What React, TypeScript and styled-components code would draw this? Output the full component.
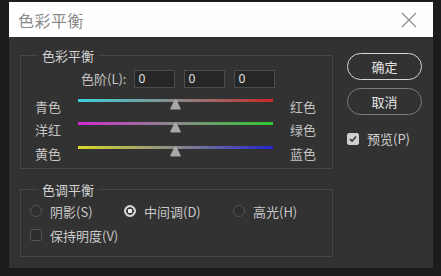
import React from 'react';
import styled, { createGlobalStyle } from 'styled-components';

const GlobalStyle = createGlobalStyle`
  html, body {
    margin: 0;
    padding: 0;
    background: #1c1c1c;
  }
  body {
    font-family: "Noto Sans CJK SC", "Noto Sans", sans-serif;
  }
`;

const Dialog = styled.div`
  margin: 2px 0 0 9px;
  width: 424px;
  height: 266px;
  background: #323232;
  display: flex;
  flex-direction: column;
`;

const TitleBar = styled.div`
  height: 35px;
  background: #fefefe;
  display: flex;
  align-items: center;
  justify-content: space-between;
  padding: 0 16px 0 9px;
  flex-shrink: 0;
`;

const Title = styled.div`
  font-size: 16px;
  color: #8a8a8a;
  letter-spacing: 0.5px;
`;

const Body = styled.div`
  flex: 1;
  display: flex;
  padding: 10px 0 0 11px;
  gap: 14px;
`;

const LeftColumn = styled.div`
  width: 313px;
  display: flex;
  flex-direction: column;
  gap: 12px;
`;

const Group = styled.fieldset<{ $h: number }>`
  margin: 0;
  height: ${p => p.$h}px;
  box-sizing: border-box;
  border: 1px solid #464646;
  padding: 0 0 0 9px;
  min-width: 0;
`;

const Legend = styled.legend`
  font-size: 13px;
  color: #d2d2d2;
  padding: 0 4px;
  margin-left: 8px;
  line-height: 17px;
`;

const LevelsRow = styled.div`
  display: flex;
  align-items: center;
  padding-left: 51px;
  margin-top: 5px;
  height: 19px;
`;

const LevelsLabel = styled.span`
  font-size: 13px;
  color: #c4c4c4;
  margin-right: 8px;
`;

const Inputs = styled.div`
  display: flex;
  gap: 9px;
`;

const NumBox = styled.div`
  width: 41px;
  height: 18px;
  box-sizing: border-box;
  background: #262626;
  border: 1px solid #4c4c4c;
  color: #e0e0e0;
  font-size: 12px;
  line-height: 16px;
  padding-left: 3px;
  font-family: "Noto Sans", sans-serif;
`;

const Sliders = styled.div`
  margin-top: 5px;
  display: flex;
  flex-direction: column;
`;

const SliderRow = styled.div`
  display: grid;
  grid-template-columns: 43px 195px auto;
  align-items: center;
  height: 23.5px;
  padding-left: 5px;
`;

const SideLabel = styled.span<{ $right?: boolean }>`
  font-size: 13px;
  color: #c4c4c4;
  padding-left: ${p => (p.$right ? '17px' : '0')};
  padding-top: 3px;
`;

const TrackWrap = styled.div`
  position: relative;
  height: 14px;
`;

const Track = styled.div<{ $from: string; $to: string }>`
  position: absolute;
  left: 0;
  right: 0;
  top: 1px;
  height: 3px;
  background: linear-gradient(to right, ${p => p.$from}, #8a8a8a 50%, ${p => p.$to});
`;

const Thumb = styled.svg`
  position: absolute;
  left: 92px;
  top: 1px;
`;

const OptionRow = styled.div`
  display: flex;
  align-items: center;
  height: 22px;
  margin-top: 2px;
`;

const Option = styled.label<{ $w?: number }>`
  display: flex;
  align-items: center;
  gap: 8px;
  width: ${p => (p.$w ? `${p.$w}px` : 'auto')};
  font-size: 13px;
  color: #c8c8c8;
`;

const Radio = styled.span<{ $on?: boolean }>`
  width: 12px;
  height: 12px;
  box-sizing: border-box;
  border-radius: 50%;
  border: 1px solid ${p => (p.$on ? '#d8d8d8' : '#555')};
  background: ${p =>
    p.$on
      ? 'radial-gradient(circle, #f0f0f0 0 2px, #3a3a3a 2.5px 3.5px, #d6d6d6 4px)'
      : '#2e2e2e'};
`;

const Check = styled.span<{ $on?: boolean }>`
  width: 12px;
  height: 12px;
  box-sizing: border-box;
  border-radius: 2px;
  border: 1px solid ${p => (p.$on ? '#cfcfcf' : '#555')};
  background: ${p => (p.$on ? '#cfcfcf' : '#2e2e2e')};
  display: flex;
  align-items: center;
  justify-content: center;
`;

const RightColumn = styled.div`
  display: flex;
  flex-direction: column;
  padding-top: 6px;
`;

const Button = styled.button<{ $primary?: boolean }>`
  width: 75px;
  height: 27px;
  border-radius: 14px;
  background: transparent;
  border: 1.5px solid ${p => (p.$primary ? '#d6d6d6' : '#7c7c7c')};
  color: #e4e4e4;
  font-size: 13px;
  font-family: inherit;
  padding: 0;
  margin-bottom: 8px;
`;

const Preview = styled(Option)`
  margin-top: 6px;
  color: #d0d0d0;
`;

const sliders = [
  { l: '青色', r: '红色', from: '#3cd2dc', to: '#c82828' },
  { l: '洋红', r: '绿色', from: '#d22ad2', to: '#2ec82e' },
  { l: '黄色', r: '蓝色', from: '#dada2a', to: '#2424d0' },
];

const CheckMark = () => (
  <svg width="8" height="8" viewBox="0 0 8 8">
    <path d="M1 4.2 L3.1 6.2 L7 1.6" fill="none" stroke="#333" strokeWidth="1.6" />
  </svg>
);

export default function App() {
  return (
    <>
      <GlobalStyle />
      <Dialog>
        <TitleBar>
          <Title>色彩平衡</Title>
          <svg width="16" height="16" viewBox="0 0 16 16">
            <path d="M1 1 L15 15 M15 1 L1 15" stroke="#8c8c8c" strokeWidth="1.2" />
          </svg>
        </TitleBar>
        <Body>
          <LeftColumn>
            <Group $h={122}>
              <Legend>色彩平衡</Legend>
              <LevelsRow>
                <LevelsLabel>色阶(L):</LevelsLabel>
                <Inputs>
                  <NumBox>0</NumBox>
                  <NumBox>0</NumBox>
                  <NumBox>0</NumBox>
                </Inputs>
              </LevelsRow>
              <Sliders>
                {sliders.map(s => (
                  <SliderRow key={s.l}>
                    <SideLabel>{s.l}</SideLabel>
                    <TrackWrap>
                      <Track $from={s.from} $to={s.to} />
                      <Thumb width="11" height="11" viewBox="0 0 11 11">
                        <path d="M4.3 1.2 Q5.5 -0.2 6.7 1.2 L10.5 9 Q11 10.5 9.5 10.5 L1.5 10.5 Q0 10.5 0.5 9 Z" fill="#a8a8a8" />
                      </Thumb>
                    </TrackWrap>
                    <SideLabel $right>{s.r}</SideLabel>
                  </SliderRow>
                ))}
              </Sliders>
            </Group>
            <Group $h={76}>
              <Legend>色调平衡</Legend>
              <OptionRow>
                <Option $w={94}><Radio />阴影(S)</Option>
                <Option $w={109}><Radio $on />中间调(D)</Option>
                <Option><Radio />高光(H)</Option>
              </OptionRow>
              <OptionRow>
                <Option><Check />保持明度(V)</Option>
              </OptionRow>
            </Group>
          </LeftColumn>
          <RightColumn>
            <Button $primary>确定</Button>
            <Button>取消</Button>
            <Preview><Check $on><CheckMark /></Check>预览(P)</Preview>
          </RightColumn>
        </Body>
      </Dialog>
    </>
  );
}
